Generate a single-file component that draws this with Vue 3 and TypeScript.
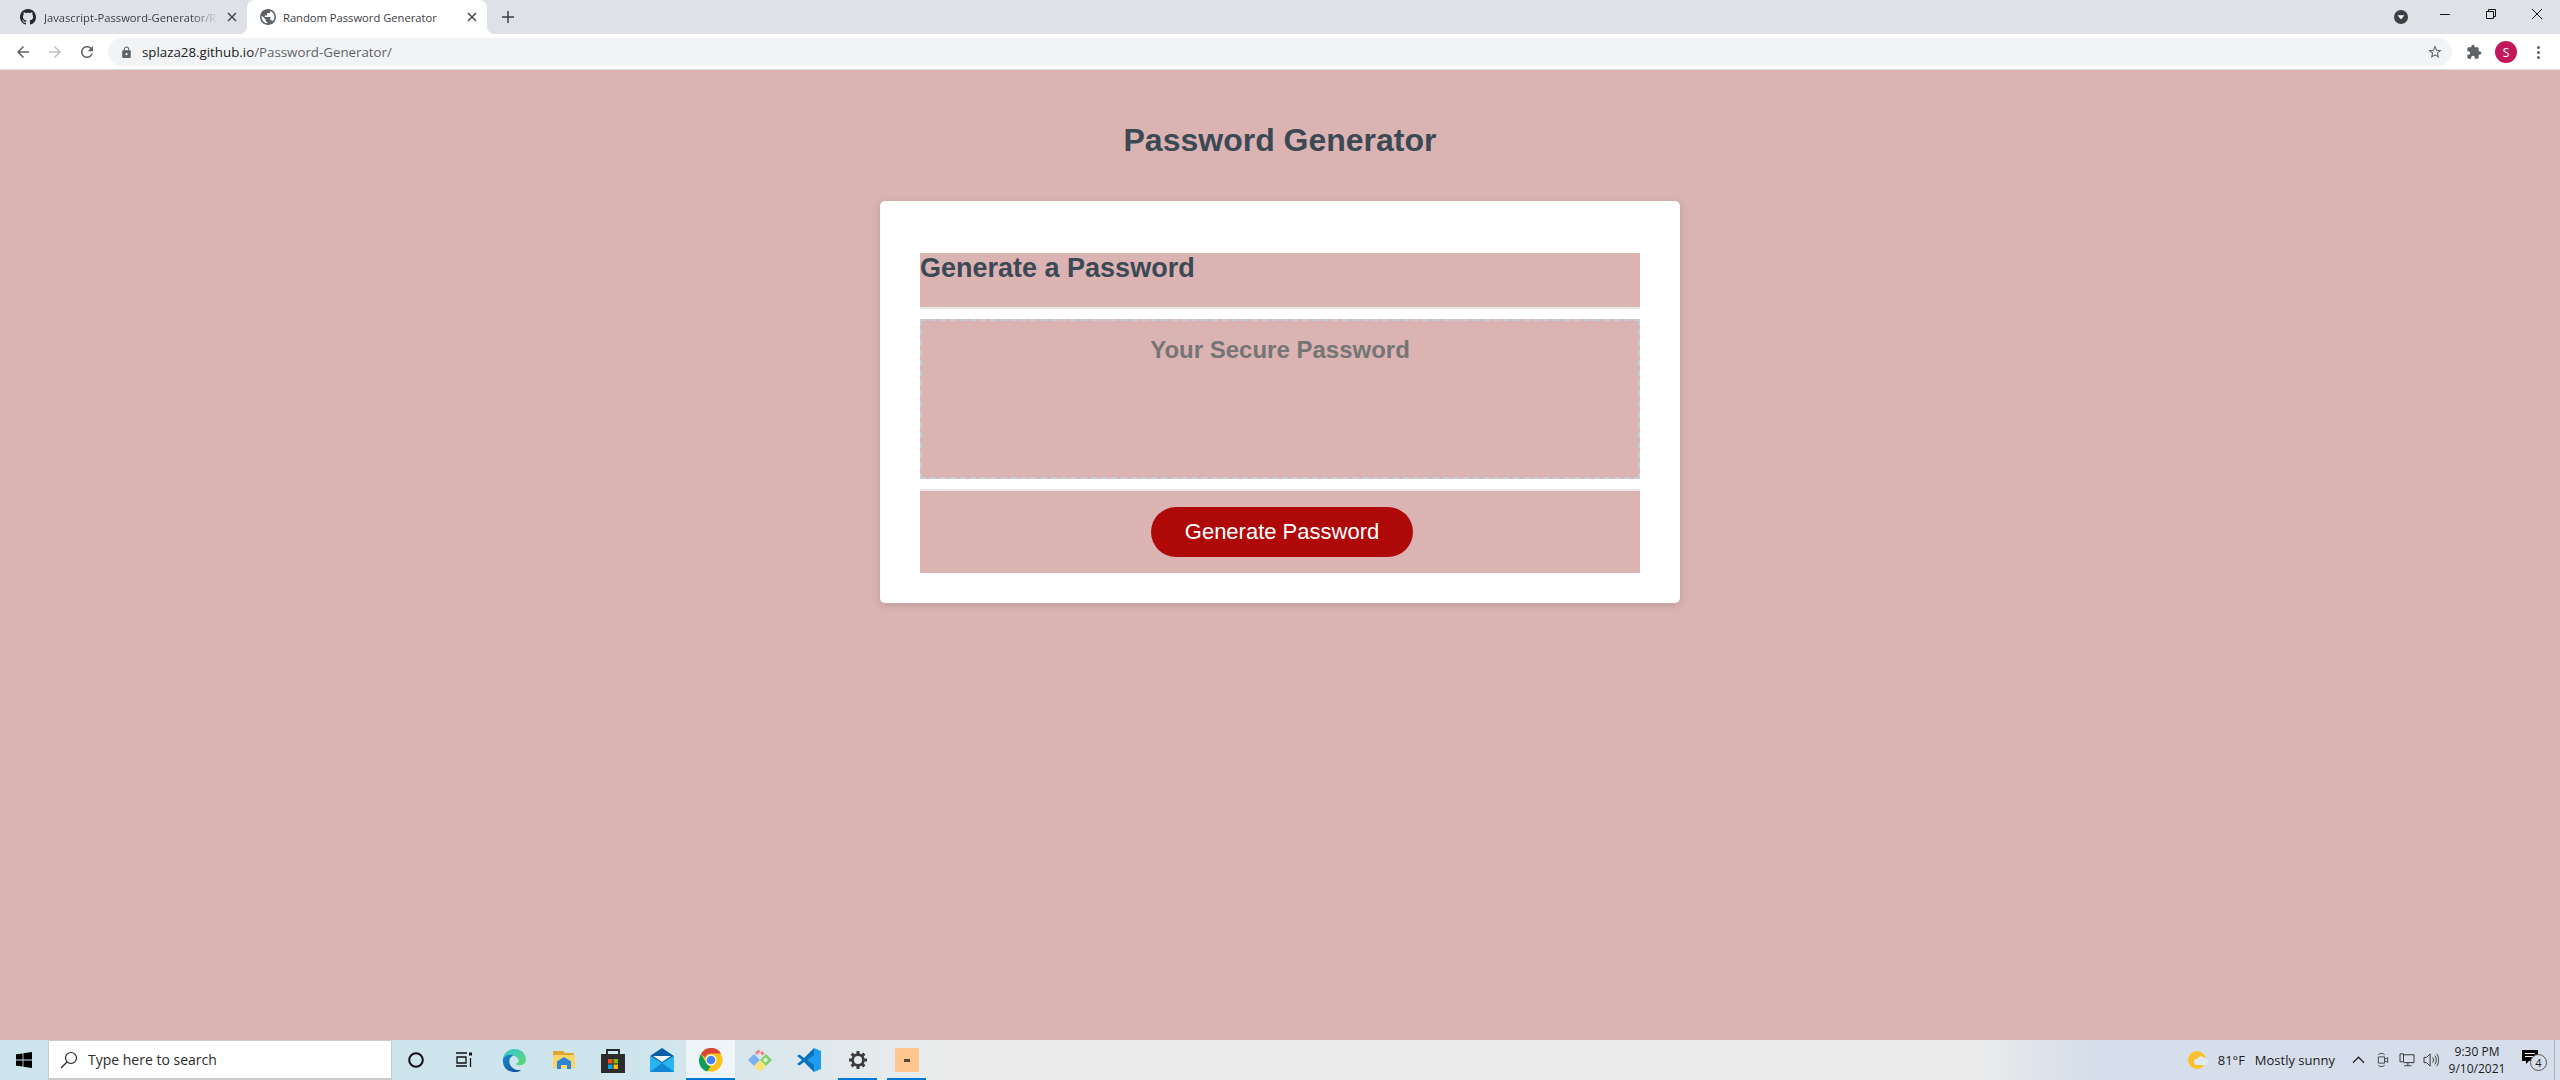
<script setup lang="ts">
const title = 'Password Generator'
const placeholder = 'Your Secure Password'
</script>

<template>
  <div class="screen">
    <div class="tabstrip">
      <div class="tab">
        <svg class="favicon" viewBox="0 0 16 16"><path fill="#24292e" d="M8 0C3.58 0 0 3.58 0 8c0 3.54 2.29 6.53 5.47 7.59.4.07.55-.17.55-.38 0-.19-.01-.82-.01-1.49-2.01.37-2.53-.49-2.69-.94-.09-.23-.48-.94-.82-1.13-.28-.15-.68-.52-.01-.53.63-.01 1.08.58 1.23.82.72 1.21 1.87.87 2.33.66.07-.52.28-.87.51-1.07-1.78-.2-3.64-.89-3.64-3.95 0-.87.31-1.59.82-2.15-.08-.2-.36-1.02.08-2.12 0 0 .67-.21 2.2.82.64-.18 1.32-.27 2-.27.68 0 1.36.09 2 .27 1.53-1.04 2.2-.82 2.2-.82.44 1.1.16 1.92.08 2.12.51.56.82 1.27.82 2.15 0 3.07-1.87 3.75-3.65 3.95.29.25.54.73.54 1.48 0 1.07-.01 1.93-.01 2.2 0 .21.15.46.55.38A8.013 8.013 0 0016 8c0-4.42-3.58-8-8-8z" /></svg>
        <span class="tab-title faded">Javascript-Password-Generator/R</span>
        <svg class="tab-close" viewBox="0 0 10 10"><path d="M1 1l8 8M9 1l-8 8" /></svg>
      </div>
      <div class="tab active">
        <svg class="favicon" viewBox="2 2 20 20"><path fill="#5f6368" d="M12 2C6.48 2 2 6.48 2 12s4.48 10 10 10 10-4.48 10-10S17.52 2 12 2zm-1 17.93c-3.95-.49-7-3.85-7-7.93 0-.62.08-1.21.21-1.79L9 15v1c0 1.1.9 2 2 2v1.93zm6.9-2.54c-.26-.81-1-1.39-1.9-1.39h-1v-3c0-.55-.45-1-1-1H8v-2h2c.55 0 1-.45 1-1V7h2c1.1 0 2-.9 2-2v-.41c2.93 1.19 5 4.06 5 7.41 0 2.08-.8 3.97-2.1 5.39z" /></svg>
        <span class="tab-title">Random Password Generator</span>
        <svg class="tab-close" viewBox="0 0 10 10"><path d="M1 1l8 8M9 1l-8 8" /></svg>
      </div>
      <svg class="new-tab" viewBox="0 0 12 12"><path d="M6 0v12M0 6h12" /></svg>
      <div class="strip-right">
        <span class="tab-search"><svg viewBox="0 0 14 14"><circle cx="7" cy="7" r="7" fill="#3c4043" /><path d="M3.6 5.2h6.8L7 9.6z" fill="#fff" /></svg></span>
        <svg class="win-btn" viewBox="0 0 46 30"><path d="M18 14.5h10" /></svg>
        <svg class="win-btn" viewBox="0 0 46 30"><path d="M18.5 11.5h7v7h-7zM20.5 11.5v-2h7v7h-2" /></svg>
        <svg class="win-btn" viewBox="0 0 46 30"><path d="M18 9l10 10M28 9l-10 10" /></svg>
      </div>
    </div>

    <div class="toolbar">
      <svg class="nav" viewBox="0 0 24 24"><path fill="#5f6368" d="M20 11H7.83l5.59-5.59L12 4l-8 8 8 8 1.41-1.41L7.83 13H20v-2z" /></svg>
      <svg class="nav" viewBox="0 0 24 24"><path fill="#bdc1c6" d="M4 11h12.17l-5.59-5.59L12 4l8 8-8 8-1.41-1.41L16.17 13H4v-2z" /></svg>
      <svg class="nav" viewBox="0 0 24 24"><path fill="#5f6368" d="M17.65 6.35C16.2 4.9 14.21 4 12 4c-4.42 0-7.99 3.58-7.99 8s3.57 8 7.99 8c3.73 0 6.84-2.55 7.73-6h-2.08c-.82 2.33-3.04 4-5.65 4-3.31 0-6-2.69-6-6s2.69-6 6-6c1.66 0 3.14.69 4.22 1.78L13 11h7V4l-2.35 2.35z" /></svg>
      <div class="omnibox">
        <svg class="lock" viewBox="0 0 24 24"><path fill="#5f6368" d="M18 8h-1V6c0-2.76-2.24-5-5-5S7 3.24 7 6v2H6c-1.1 0-2 .9-2 2v10c0 1.1.9 2 2 2h12c1.1 0 2-.9 2-2V10c0-1.1-.9-2-2-2zm-6 9c-1.1 0-2-.9-2-2s.9-2 2-2 2 .9 2 2-.9 2-2 2zm3.1-9H8.9V6c0-1.71 1.39-3.1 3.1-3.1 1.71 0 3.1 1.39 3.1 3.1v2z" /></svg>
        <span class="url"><b>splaza28.github.io</b>/Password-Generator/</span>
        <svg class="star" viewBox="0 0 24 24"><path fill="#5f6368" d="M22 9.24l-7.19-.62L12 2 9.19 8.63 2 9.24l5.46 4.73L5.82 21 12 17.27 18.18 21l-1.63-7.03L22 9.24zM12 15.4l-3.76 2.27 1-4.28-3.32-2.88 4.38-.38L12 6.1l1.71 4.04 4.38.38-3.32 2.88 1 4.28L12 15.4z" /></svg>
      </div>
      <svg class="puzzle" viewBox="0 0 24 24"><path fill="#5f6368" d="M20.5 11H19V7c0-1.1-.9-2-2-2h-4V3.5C13 2.12 11.88 1 10.5 1S8 2.12 8 3.5V5H4c-1.1 0-1.99.9-1.99 2v3.8H3.5c1.49 0 2.7 1.21 2.7 2.7s-1.21 2.7-2.7 2.7H2V20c0 1.1.9 2 2 2h3.8v-1.5c0-1.49 1.21-2.7 2.7-2.7 1.49 0 2.7 1.21 2.7 2.7V22H17c1.1 0 2-.9 2-2v-4h1.5c1.38 0 2.5-1.12 2.5-2.5S21.88 11 20.5 11z" /></svg>
      <span class="avatar">S</span>
      <span class="kebab"><i></i><i></i><i></i></span>
    </div>

    <main class="page">
      <h1 class="page-title">{{ title }}</h1>
      <section class="card">
        <header class="card-header"><h2>Generate a Password</h2></header>
        <div class="card-body">
          <textarea class="password" :placeholder="placeholder" readonly></textarea>
        </div>
        <footer class="card-footer">
          <button class="btn">Generate Password</button>
        </footer>
      </section>
    </main>

    <div class="taskbar">
      <span class="start">
        <svg viewBox="0 0 16 16"><path fill="#000" d="M0 2.3l6.6-.9v6.2H0zM7.4 1.3L16 0v7.6H7.4zM0 8.4h6.6v6.2L0 13.7zM7.4 8.4H16V16l-8.600-1.200z" /></svg>
      </span>
      <div class="search">
        <svg viewBox="0 0 18 18"><circle cx="11" cy="7" r="5.500" fill="none" stroke="#222" stroke-width="1.200" /><path d="M7 11l-6 6" stroke="#222" stroke-width="1.300" /></svg>
        <span>Type here to search</span>
      </div>
      <span class="sys-icon"><svg width="18" height="18" viewBox="0 0 18 18"><circle cx="9" cy="9" r="6.800" fill="none" stroke="#111" stroke-width="2" /></svg></span>
      <span class="sys-icon"><svg width="18" height="18" viewBox="0 0 18 18"><path d="M1 2h11M1 15h11M2 6h9v6H2zM15.500 7v9" fill="none" stroke="#111" stroke-width="1.300" /><rect x="14" y="1.500" width="3" height="3" fill="#111" /></svg></span>

      <div class="apps">
        <span class="app">
          <svg width="25" height="25" viewBox="0 0 26 26">
            <defs>
              <linearGradient id="edgeA" x1="0" y1="0" x2="1" y2="1"><stop offset="0" stop-color="#35c1d6" /><stop offset="1" stop-color="#5fdc6e" /></linearGradient>
              <linearGradient id="edgeB" x1="0" y1="0" x2="1" y2="1"><stop offset="0" stop-color="#1b8ad3" /><stop offset="1" stop-color="#0c4f97" /></linearGradient>
            </defs>
            <path fill="url(#edgeA)" d="M1 11C2 5 7 1 13 1c7 0 12 5 12 11 0 4-3 6-7 6-2 0-4-1-4-2 3 0 4-2 3-4-2-4-7-5-10-4-3 .8-5 2-6 3z" />
            <path fill="url(#edgeB)" d="M1 11c3-4 8-5 11-3-4 1-5 4-4 8 1 4 5 7 10 7 1 0 2 0 2-.5-2 2-4 2.500-7 2.500C6 25 0 20 1 11z" />
          </svg>
        </span>
        <span class="app">
          <svg width="22" height="22" viewBox="0 0 22 22">
            <path fill="#e0a52a" d="M0 2h10l2 2h9v4H0z" />
            <path fill="#fcd668" d="M0 6h22v13H0z" />
            <path fill="#2d86d4" d="M4 20v-7h14v7h-4v-4H8v4zM3 13l8-5 8 5z" />
          </svg>
        </span>
        <span class="app">
          <svg width="24" height="25" viewBox="0 0 24 25">
            <path fill="none" stroke="#222" stroke-width="1.800" d="M6 7V2h12v5" />
            <rect y="6" width="24" height="19" fill="#2b2b2b" />
            <rect x="7" y="11" width="4.500" height="4.500" fill="#f25022" />
            <rect x="12.500" y="11" width="4.500" height="4.500" fill="#7fba00" />
            <rect x="7" y="16.500" width="4.500" height="4.500" fill="#00a4ef" />
            <rect x="12.500" y="16.500" width="4.500" height="4.500" fill="#ffb900" />
          </svg>
        </span>
        <span class="app">
          <svg width="24" height="24" viewBox="0 0 24 24">
            <path fill="#0a5ea8" d="M0 8l12-8 12 8-12 8z" />
            <path fill="#f4f7fa" d="M3 8h18l-9 6z" />
            <path fill="#28b4ee" d="M0 8l12 7 12-7v16H0z" />
            <path fill="#0f86d6" d="M0 24l12-9 12 9z" />
          </svg>
        </span>
        <span class="app running active">
          <svg width="24" height="24" viewBox="0 0 24 24">
            <circle cx="12" cy="12" r="11.500" fill="#fbc116" />
            <path fill="#db4437" d="M2 6a11.500 11.500 0 0 1 20-0.500H12a6.500 6.500 0 0 0-6 4z" />
            <path fill="#0f9d58" d="M2 6l5.500 9.500a6.500 6.500 0 0 0 4 3L8 23.500A11.500 11.500 0 0 1 2 6z" />
            <circle cx="12" cy="12" r="5.500" fill="#fff" />
            <circle cx="12" cy="12" r="4.300" fill="#4285f4" />
          </svg>
        </span>
        <span class="app">
          <svg width="24" height="24" viewBox="0 0 24 24">
            <path fill="#f47f85" d="M7 5l3.500-3.500 2 2L9 7zM12 5l2-2 2.500 2.500-2 2z" />
            <path fill="#7bb1f5" d="M0 12l6-6 6 6-6 6z" />
            <path fill="#82cf6b" d="M12 12l6-6 6 6-6 6z" />
            <path fill="#fbe17b" d="M6 18l6-6 6 6-6 6z" />
            <circle cx="17.500" cy="12" r="2.200" fill="#d8f0cf" />
          </svg>
        </span>
        <span class="app">
          <svg width="24" height="24" viewBox="0 0 24 24">
            <path fill="#0a72bd" d="M17 0L7 10 2.500 6.500 0 8l5 4-5 4 2.500 1.500L7 14l10 10z" />
            <path fill="#1f9cf0" d="M17 0l7 3v18l-7 3V7l-7 5 7 5z" />
          </svg>
        </span>
        <span class="app running">
          <svg width="18" height="18" viewBox="0 0 20 20">
            <circle cx="10" cy="10" r="6" fill="none" stroke="#3d3d3d" stroke-width="3" />
            <path stroke="#3d3d3d" stroke-width="3.400" d="M10 0v4M10 16v4M0 10h4M16 10h4M2.900 2.900l2.800 2.800M14.300 14.300l2.800 2.800M2.900 17.100l2.800-2.800M14.300 5.700l2.800-2.800" />
          </svg>
        </span>
        <span class="app running">
          <span class="sticky"><i></i></span>
        </span>
      </div>

      <div class="tray">
        <svg class="weather" width="20" height="20" viewBox="0 0 20 20">
          <circle cx="9" cy="10" r="9" fill="#fbc02d" />
          <path fill="#dcebf7" d="M9 15a3 3 0 0 1 0-6 4 4 0 0 1 7-1 3.500 3.500 0 0 1 2 7z" />
        </svg>
        <span class="temp">81°F</span>
        <span class="cond">Mostly sunny</span>
        <svg class="tray-icon chevron" viewBox="0 0 14 8"><path d="M1 7l6-6 6 6" stroke-width="1.300" /></svg>
        <svg class="tray-icon meet" viewBox="0 0 18 20"><path d="M3 6h8v8H3zM11 9l4-2v6l-4-2M3 3c2-2 6-2 8 0M3 17c2 2 6 2 8 0" /></svg>
        <svg class="tray-icon net" viewBox="0 0 18 16"><path d="M5 2h12v9H5M1 1h4v9H1zM10 11v3M6 14.500h8" /></svg>
        <svg class="tray-icon vol" viewBox="0 0 18 16"><path d="M1 5h3l4-4v14l-4-4H1zM11 5c1 2 1 4 0 6M13.500 3c2 3 2 7 0 10M15.500 1c3 4 3 10 0 14" /></svg>
        <div class="clock"><span>9:30 PM</span><span>9/10/2021</span></div>
        <span class="notif">
          <svg width="16" height="14" viewBox="0 0 16 14"><path fill="#000" d="M0 0h16v11H7l-3 3v-3H0z" /><path stroke="#fff" d="M3 3.500h10M3 6.500h10" /></svg>
          <span class="badge">4</span>
        </span>
        <span class="show-desktop"></span>
      </div>
    </div>
  </div>
</template>

<style>
html,
body {
  margin: 0;
  overflow: hidden;
}
</style>

<style scoped>
.screen {
  display: flex;
  flex-direction: column;
  width: 2560px;
  height: 1080px;
  font-family: "Liberation Sans", Arial, sans-serif;
}

/* browser chrome */
.tabstrip {
  display: flex;
  align-items: center;
  height: 34px;
  background: #dee1e6;
  flex: none;
}

.tab {
  display: flex;
  align-items: center;
  width: 247px;
  height: 34px;
  padding: 0 10px 0 20px;
  box-sizing: border-box;
}

.tab.active {
  position: relative;
  width: 240px;
  padding: 0 10px 0 13px;
  background: #fff;
  border-radius: 8px 8px 0 0;
}

.tab.active::before,
.tab.active::after {
  content: "";
  position: absolute;
  bottom: 0;
  width: 8px;
  height: 8px;
}

.tab.active::before {
  left: -8px;
  background: radial-gradient(circle at 0 0, transparent 8px, #fff 8.500px);
}

.tab.active::after {
  right: -8px;
  background: radial-gradient(circle at 100% 0, transparent 8px, #fff 8.500px);
}

.favicon {
  width: 16px;
  height: 16px;
  flex: none;
}

.tab-title {
  flex: 1;
  min-width: 0;
  margin-left: 8px;
  overflow: hidden;
  white-space: nowrap;
  font-family: "Open Sans", sans-serif;
  font-size: 11.200px;
  color: #3c4043;
}

.tab.active .tab-title {
  margin-left: 7px;
}

.faded {
  -webkit-mask-image: linear-gradient(90deg, #000 85%, transparent);
  mask-image: linear-gradient(90deg, #000 85%, transparent);
}

.tab-close {
  width: 10px;
  height: 10px;
  margin-left: 9px;
  flex: none;
}

.tab-close path {
  stroke: #45494e;
  stroke-width: 1.500;
}

.new-tab {
  width: 12px;
  height: 12px;
  margin-left: 15px;
}

.new-tab path {
  stroke: #3c4043;
  stroke-width: 1.500;
}

.strip-right {
  display: flex;
  align-items: flex-start;
  height: 34px;
  margin-left: auto;
}

.tab-search {
  display: flex;
  align-items: center;
  height: 34px;
  margin-right: 14px;
}

.tab-search svg {
  width: 14px;
  height: 14px;
}

.win-btn {
  width: 46px;
  height: 30px;
  fill: none;
  stroke: #111;
}

.toolbar {
  display: flex;
  align-items: center;
  height: 36px;
  padding-top: 1px;
  box-sizing: border-box;
  border-bottom: 1px solid #dadce0;
  background: #fff;
  flex: none;
}

.nav {
  width: 18px;
  height: 18px;
  margin-left: 14px;
  flex: none;
}

.omnibox {
  display: flex;
  align-items: center;
  width: 2344px;
  height: 28px;
  margin-left: 12px;
  padding: 0 9px 0 12px;
  box-sizing: border-box;
  border-radius: 14px;
  background: #f1f3f4;
}

.lock {
  width: 13px;
  height: 13px;
}

.url {
  margin-left: 9px;
  font-family: "Open Sans", sans-serif;
  font-size: 13.300px;
  color: #5f6368;
}

.url b {
  font-weight: 400;
  color: #202124;
}

.star {
  width: 16px;
  height: 16px;
  margin-left: auto;
}

.puzzle {
  width: 16px;
  height: 16px;
  margin-left: 14px;
}

.avatar {
  display: flex;
  align-items: center;
  justify-content: center;
  width: 22px;
  height: 22px;
  margin-left: 13px;
  border-radius: 50%;
  background: #c2185b;
  color: #fff;
  font-family: "Open Sans", sans-serif;
  font-size: 12px;
}

.kebab {
  display: flex;
  flex-direction: column;
  gap: 2px;
  margin-left: 20px;
}

.kebab i {
  width: 3px;
  height: 3px;
  border-radius: 50%;
  background: #5f6368;
}

/* page */
.page {
  flex: 1;
  display: flex;
  flex-direction: column;
  align-items: center;
  background: #dcb3b3;
}

.page-title {
  margin: 52px 0 42px;
  font-size: 32px;
  line-height: 37px;
  font-weight: 700;
  color: hsl(206, 17%, 28%);
}

.card {
  width: 800px;
  height: 402px;
  padding: 52px 40px 30px;
  box-sizing: border-box;
  border-radius: 5px;
  background: #fff;
  box-shadow: rgba(0, 0, 0, 0.15) 0 2px 8px;
}

.card-header {
  height: 56px;
  box-sizing: border-box;
  border-bottom: 2px solid #e6e6e6;
  background: #dcb3b3;
}

.card-header h2 {
  margin: 0;
  font-size: 27px;
  line-height: 30px;
  font-weight: 700;
  color: hsl(206, 17%, 28%);
}

.card-body {
  margin-top: 10px;
  height: 160px;
}

.password {
  display: block;
  width: 100%;
  height: 160px;
  padding: 15px 16px;
  box-sizing: border-box;
  border: 2px dashed hsl(206, 17%, 80%);
  resize: none;
  background: #dcb3b3;
  text-align: center;
  font-family: inherit;
  font-size: 24px;
  font-weight: 700;
  outline: none;
}

.password::placeholder {
  color: #757575;
  opacity: 1;
}

.card-footer {
  display: flex;
  justify-content: center;
  align-items: flex-start;
  height: 84px;
  margin-top: 10px;
  padding-top: 16px;
  box-sizing: border-box;
  border-top: 2px solid #e6e6e6;
  background: #dcb3b3;
}

.btn {
  width: 262px;
  height: 50px;
  margin-left: 4px;
  border: 0;
  border-radius: 25px;
  background: hsl(360, 91%, 36%);
  color: #fff;
  font-family: inherit;
  font-size: 22px;
}

/* windows taskbar */
.taskbar {
  display: flex;
  align-items: stretch;
  height: 40px;
  flex: none;
  background: linear-gradient(90deg, #cfe5ee 0, #cfe5ee 640px, #ececec 960px, #ececec 1970px, #d5deea 2090px, #d5deea 100%);
}

.start {
  display: flex;
  align-items: center;
  justify-content: center;
  width: 48px;
}

.start svg {
  width: 16px;
  height: 16px;
}

.search {
  display: flex;
  align-items: center;
  width: 344px;
  padding-left: 11px;
  box-sizing: border-box;
  border: 1px solid #c9ccce;
  border-bottom-width: 2px;
  background: #fff;
  font-family: "Open Sans", sans-serif;
  font-size: 14px;
  color: #2b2b2b;
}

.search svg {
  width: 18px;
  height: 18px;
  margin-right: 10px;
}

.sys-icon {
  display: flex;
  align-items: center;
  justify-content: center;
  width: 48px;
}

.apps {
  display: flex;
  margin-left: 2px;
}

.app {
  position: relative;
  display: flex;
  align-items: center;
  justify-content: center;
  width: 49px;
  box-sizing: border-box;
}

.app.active {
  background: rgba(255, 255, 255, 0.6);
}

.running::after {
  content: "";
  position: absolute;
  left: 5px;
  right: 5px;
  bottom: 0;
  height: 2px;
  background: #0078d7;
}

.app.active::after {
  left: 0;
  right: 0;
}

.sticky {
  display: flex;
  align-items: center;
  justify-content: center;
  width: 24px;
  height: 24px;
  background: #ffc78f;
}

.sticky i {
  width: 6px;
  height: 3px;
  background: #5a4636;
}

.tray {
  display: flex;
  align-items: center;
  margin-left: auto;
  font-family: "Open Sans", sans-serif;
  font-size: 13px;
  color: #1c1c1c;
}

.weather {
  margin-right: 10px;
}

.cond {
  margin-left: 10px;
}

.tray-icon {
  fill: none;
  stroke: #222;
  stroke-width: 1;
}

.chevron {
  width: 13px;
  height: 8px;
  margin-left: 17px;
}

.meet {
  width: 14px;
  height: 16px;
  margin-left: 11px;
}

.net {
  width: 16px;
  height: 14px;
  margin-left: 9px;
}

.vol {
  width: 16px;
  height: 14px;
  margin-left: 8px;
}

.clock {
  display: flex;
  flex-direction: column;
  align-items: center;
  width: 64px;
  margin-left: 6px;
  font-size: 12px;
  line-height: 17px;
}

.notif {
  position: relative;
  display: flex;
  justify-content: center;
  width: 30px;
  margin-left: 6px;
  padding-bottom: 6px;
}

.badge {
  position: absolute;
  left: 15px;
  top: 4px;
  width: 15px;
  height: 15px;
  border: 1px solid #555;
  border-radius: 50%;
  background: #d5deea;
  text-align: center;
  font-size: 11px;
  line-height: 15px;
}

.show-desktop {
  width: 5px;
  height: 40px;
  margin-left: 9px;
  border-left: 1px solid #a9b1bb;
}
</style>
